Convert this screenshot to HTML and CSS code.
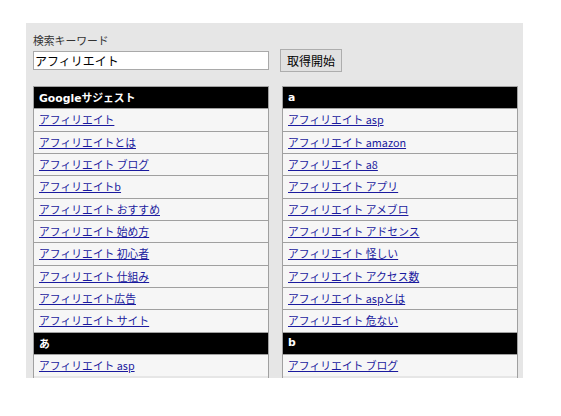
FILE: index.html
```html
<!DOCTYPE html>
<html lang="ja">
<head>
<meta charset="utf-8">
<title>Googleサジェスト取得</title>
<link rel="stylesheet" href="styles.css">
</head>
<body>
<div class="panel">
  <div class="label">検索キーワード</div>
  <div class="form-row">
    <input class="keyword" type="text" value="アフィリエイト">
    <button class="start" type="button">取得開始</button>
  </div>
  <div class="columns">
    <div class="list">
      <div class="row head">Googleサジェスト</div>
      <div class="row"><a href="#">アフィリエイト</a></div>
      <div class="row"><a href="#">アフィリエイトとは</a></div>
      <div class="row"><a href="#">アフィリエイト ブログ</a></div>
      <div class="row"><a href="#">アフィリエイトb</a></div>
      <div class="row"><a href="#">アフィリエイト おすすめ</a></div>
      <div class="row"><a href="#">アフィリエイト 始め方</a></div>
      <div class="row"><a href="#">アフィリエイト 初心者</a></div>
      <div class="row"><a href="#">アフィリエイト 仕組み</a></div>
      <div class="row"><a href="#">アフィリエイト広告</a></div>
      <div class="row"><a href="#">アフィリエイト サイト</a></div>
      <div class="row head">あ</div>
      <div class="row"><a href="#">アフィリエイト asp</a></div>
    </div>
    <div class="list">
      <div class="row head">a</div>
      <div class="row"><a href="#">アフィリエイト asp</a></div>
      <div class="row"><a href="#">アフィリエイト amazon</a></div>
      <div class="row"><a href="#">アフィリエイト a8</a></div>
      <div class="row"><a href="#">アフィリエイト アプリ</a></div>
      <div class="row"><a href="#">アフィリエイト アメブロ</a></div>
      <div class="row"><a href="#">アフィリエイト アドセンス</a></div>
      <div class="row"><a href="#">アフィリエイト 怪しい</a></div>
      <div class="row"><a href="#">アフィリエイト アクセス数</a></div>
      <div class="row"><a href="#">アフィリエイト aspとは</a></div>
      <div class="row"><a href="#">アフィリエイト 危ない</a></div>
      <div class="row head">b</div>
      <div class="row"><a href="#">アフィリエイト ブログ</a></div>
    </div>
  </div>
</div>
</body>
</html>
```
FILE: styles.css
```css
html, body {
  margin: 0;
  padding: 0;
  background: #ffffff;
}

body {
  font-family: "Noto Sans CJK JP", "Noto Sans", sans-serif;
  font-size: 10.8px;
  color: #222222;
}

.panel {
  box-sizing: border-box;
  margin: 23px 0 0 26px;
  width: 497px;
  height: 355px;
  padding: 9px 5px 0 7px;
  background: #e6e6e6;
  overflow: hidden;
}

.label {
  line-height: 16px;
  height: 16px;
  color: #333333;
}

.form-row {
  display: flex;
  align-items: center;
  margin-top: 1px;
  height: 23px;
}

.keyword {
  box-sizing: border-box;
  width: 236px;
  height: 19px;
  margin: 0;
  padding: 0 1px;
  border: 1px solid #a9a9a9;
  background: #ffffff;
  font-family: "Noto Sans CJK JP", sans-serif;
  font-size: 12px;
  line-height: 17px;
  color: #000000;
  outline: none;
}

.start {
  box-sizing: border-box;
  width: 62px;
  height: 23px;
  margin: 0 0 0 11px;
  padding: 0;
  border: 1px solid #adadad;
  border-radius: 0;
  background: #e1e1e1;
  font-family: "Noto Sans CJK JP", sans-serif;
  font-size: 12px;
  line-height: 21px;
  color: #000000;
}

.columns {
  display: grid;
  grid-template-columns: 236px 236px;
  column-gap: 13px;
  margin-top: 14px;
}

.list {
  display: flex;
  flex-direction: column;
  border-left: 1px solid #a0a0a0;
  border-right: 1px solid #a0a0a0;
  border-bottom: 1px solid #a0a0a0;
  padding-bottom: 4px;
}

.row {
  box-sizing: border-box;
  height: 22.34px;
  flex: none;
  display: flex;
  align-items: center;
  padding: 0 0 1px 5px;
  border-top: 1px solid #a0a0a0;
  background: #f6f6f6;
  white-space: nowrap;
}

.row a {
  color: #1a1a9e;
  text-decoration: underline;
  text-underline-offset: 1px;
}

.row.head {
  background: #000000;
  color: #ffffff;
  font-family: "DejaVu Sans", "Noto Sans CJK JP", sans-serif;
  font-weight: bold;
  font-size: 10.8px;
}
```
